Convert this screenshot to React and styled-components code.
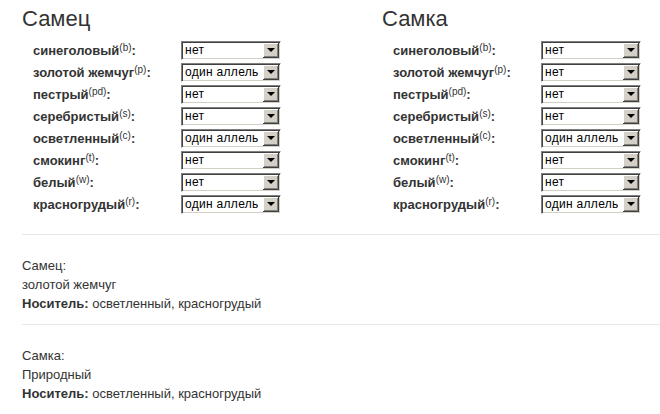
import styled, { createGlobalStyle } from "styled-components";

const GlobalStyle = createGlobalStyle`
  body {
    margin: 0;
    background: #fff;
    font-family: "Liberation Sans", Arial, sans-serif;
    color: #333;
  }
`;

const Page = styled.div`
  width: 660px;
  padding-top: 6px;
  overflow: hidden;
`;

const Columns = styled.div`
  display: grid;
  grid-template-columns: 360px 300px;
  padding-left: 22px;
`;

const Heading = styled.h2`
  margin: 0 0 7px;
  font-size: 22px;
  line-height: 26px;
  font-weight: normal;
  color: #333;
`;

const Form = styled.div`
  padding-left: 11px;
`;

const Row = styled.div`
  display: flex;
  align-items: center;
  height: 22px;
`;

const Label = styled.div`
  width: 148px;
  font-size: 13px;
  font-weight: bold;
  color: #333;
  white-space: nowrap;
`;

const Sup = styled.sup`
  font-size: 10px;
  font-weight: normal;
  vertical-align: 4px;
  line-height: 0;
`;

const Select = styled.div`
  box-sizing: border-box;
  width: 100px;
  height: 19px;
  display: flex;
  align-items: center;
  border: 1px solid;
  border-color: #808080 #fff #fff #808080;
  box-shadow: inset 1px 1px 0 #404040, inset -1px -1px 0 #d4d0c8;
  background: #fff;
  padding: 1px;
`;

const Value = styled.span`
  flex: 1;
  padding-left: 2px;
  font-size: 12px;
  letter-spacing: 0.3px;
  color: #000;
  white-space: nowrap;
  overflow: hidden;
`;

const Arrow = styled.div`
  width: 16px;
  height: 15px;
  flex: none;
  box-sizing: border-box;
  background: #d4d0c8;
  box-shadow: inset -1px -1px 0 #404040, inset 1px 1px 0 #fff,
    inset -2px -2px 0 #808080;
  display: flex;
  align-items: center;
  justify-content: center;

  &::after {
    content: "";
    border-left: 4px solid transparent;
    border-right: 4px solid transparent;
    border-top: 4px solid #000;
    margin: 0 1px 1px 0;
  }
`;

const Divider = styled.hr`
  margin: ${(p) => p.$top}px 0 0 22px;
  border: 0;
  border-top: 1px solid #e8e8e8;
  height: 0;
`;

const Summary = styled.div`
  padding: 21px 0 11px 22px;
  font-size: 13px;
  line-height: 19px;
  color: #333;
`;

const Bold = styled.b`
  font-weight: bold;
`;

const genes = [
  ["синеголовый", "b"],
  ["золотой жемчуг", "p"],
  ["пестрый", "pd"],
  ["серебристый", "s"],
  ["осветленный", "c"],
  ["смокинг", "t"],
  ["белый", "w"],
  ["красногрудый", "r"],
];

const male = ["нет", "один аллель", "нет", "нет", "один аллель", "нет", "нет", "один аллель"];
const female = ["нет", "нет", "нет", "нет", "один аллель", "нет", "нет", "один аллель"];

const Parent = ({ title, values }) => (
  <div>
    <Heading>{title}</Heading>
    <Form>
      {genes.map(([name, code], i) => (
        <Row key={code}>
          <Label>
            {name}
            <Sup>({code})</Sup>:
          </Label>
          <Select>
            <Value>{values[i]}</Value>
            <Arrow />
          </Select>
        </Row>
      ))}
    </Form>
  </div>
);

export default function App() {
  return (
    <Page>
      <GlobalStyle />
      <Columns>
        <Parent title="Самец" values={male} />
        <Parent title="Самка" values={female} />
      </Columns>
      <Divider $top={19} />
      <Summary>
        Самец:
        <br />
        золотой жемчуг
        <br />
        <Bold>Носитель:</Bold> осветленный, красногрудый
      </Summary>
      <Divider $top={0} />
      <Summary>
        Самка:
        <br />
        Природный
        <br />
        <Bold>Носитель:</Bold> осветленный, красногрудый
      </Summary>
    </Page>
  );
}
